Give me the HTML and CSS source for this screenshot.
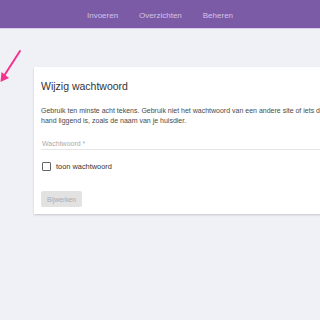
FILE: index.html
```html
<!DOCTYPE html>
<html lang="nl">
<head>
<meta charset="utf-8">
<title>Wijzig wachtwoord</title>
<link rel="stylesheet" href="styles.css">
</head>
<body>
<header class="topbar">
  <nav class="nav">
    <a class="nav-link" href="#">Invoeren</a>
    <a class="nav-link" href="#">Overzichten</a>
    <a class="nav-link" href="#">Beheren</a>
  </nav>
</header>
<svg class="pointer" width="24" height="34" viewBox="0 0 24 34">
  <path d="M20 2 L2 30" stroke="#f5338f" stroke-width="2" stroke-linecap="round" fill="none"/>
  <path d="M0.5 33 L1.5 23 L9 29 Z" fill="#f5338f"/>
</svg>
<main class="page">
  <section class="card">
    <h1 class="card-title">Wijzig wachtwoord</h1>
    <p class="card-text">Gebruik ten minste acht tekens. Gebruik niet het wachtwoord van een andere site of iets dat voor de<br>hand liggend is, zoals de naam van je huisdier.</p>
    <div class="field">
      <span class="field-label">Wachtwoord *</span>
    </div>
    <label class="check">
      <span class="check-box"></span>
      <span class="check-text">toon wachtwoord</span>
    </label>
    <div class="actions">
      <button class="btn" disabled>Bijwerken</button>
    </div>
  </section>
</main>
</body>
</html>
```
FILE: styles.css
```css
html, body {
  margin: 0;
  padding: 0;
  overflow: hidden;
  height: 100%;
}
body {
  background: #f0f1f6;
  font-family: "Liberation Sans", Arial, sans-serif;
  color: #333;
  position: relative;
}
.topbar {
  height: 28px;
  background: #7b5aa6;
  border-bottom: 1px solid #d8ccec;
  display: flex;
  justify-content: center;
  align-items: center;
}
.nav {
  display: flex;
  gap: 21px;
  padding-top: 2px;
}
.nav-link {
  color: #d3c4ea;
  font-size: 8px;
  text-decoration: none;
}
.pointer {
  position: absolute;
  left: 0;
  top: 49px;
}
.page {
  padding: 38px 0 0 34px;
}
.card {
  width: 460px;
  background: #fff;
  box-shadow: 0 1px 2px rgba(0,0,0,0.18);
  padding: 12px 7px 7px;
  box-sizing: border-box;
}
.card-title {
  margin: 0;
  font-size: 10.5px;
  line-height: 14px;
  font-weight: normal;
  color: #333;
}
.card-text {
  margin: 13px 0 0;
  font-size: 7px;
  line-height: 10px;
  color: #4a4a4a;
}
.field {
  margin-top: 13px;
  width: 330px;
  border-bottom: 1px solid #e6e6e6;
  padding: 0 0 1px 1px;
}
.field-label {
  display: block;
  font-size: 7px;
  line-height: 9px;
  color: #aaa;
}
.check {
  display: flex;
  align-items: center;
  gap: 5px;
  margin-top: 12px;
  padding-left: 1px;
}
.check-box {
  width: 7px;
  height: 7px;
  border: 1px solid #666;
  border-radius: 1px;
}
.check-text {
  font-size: 7.4px;
  line-height: 9px;
  color: #333;
}
.actions {
  margin-top: 20px;
}
.btn {
  display: block;
  width: 41px;
  height: 16px;
  border: none;
  border-radius: 2px;
  background: #e2e2e2;
  color: #aaa;
  font-family: "Liberation Sans", Arial, sans-serif;
  font-size: 6.7px;
  padding: 0;
}
```
